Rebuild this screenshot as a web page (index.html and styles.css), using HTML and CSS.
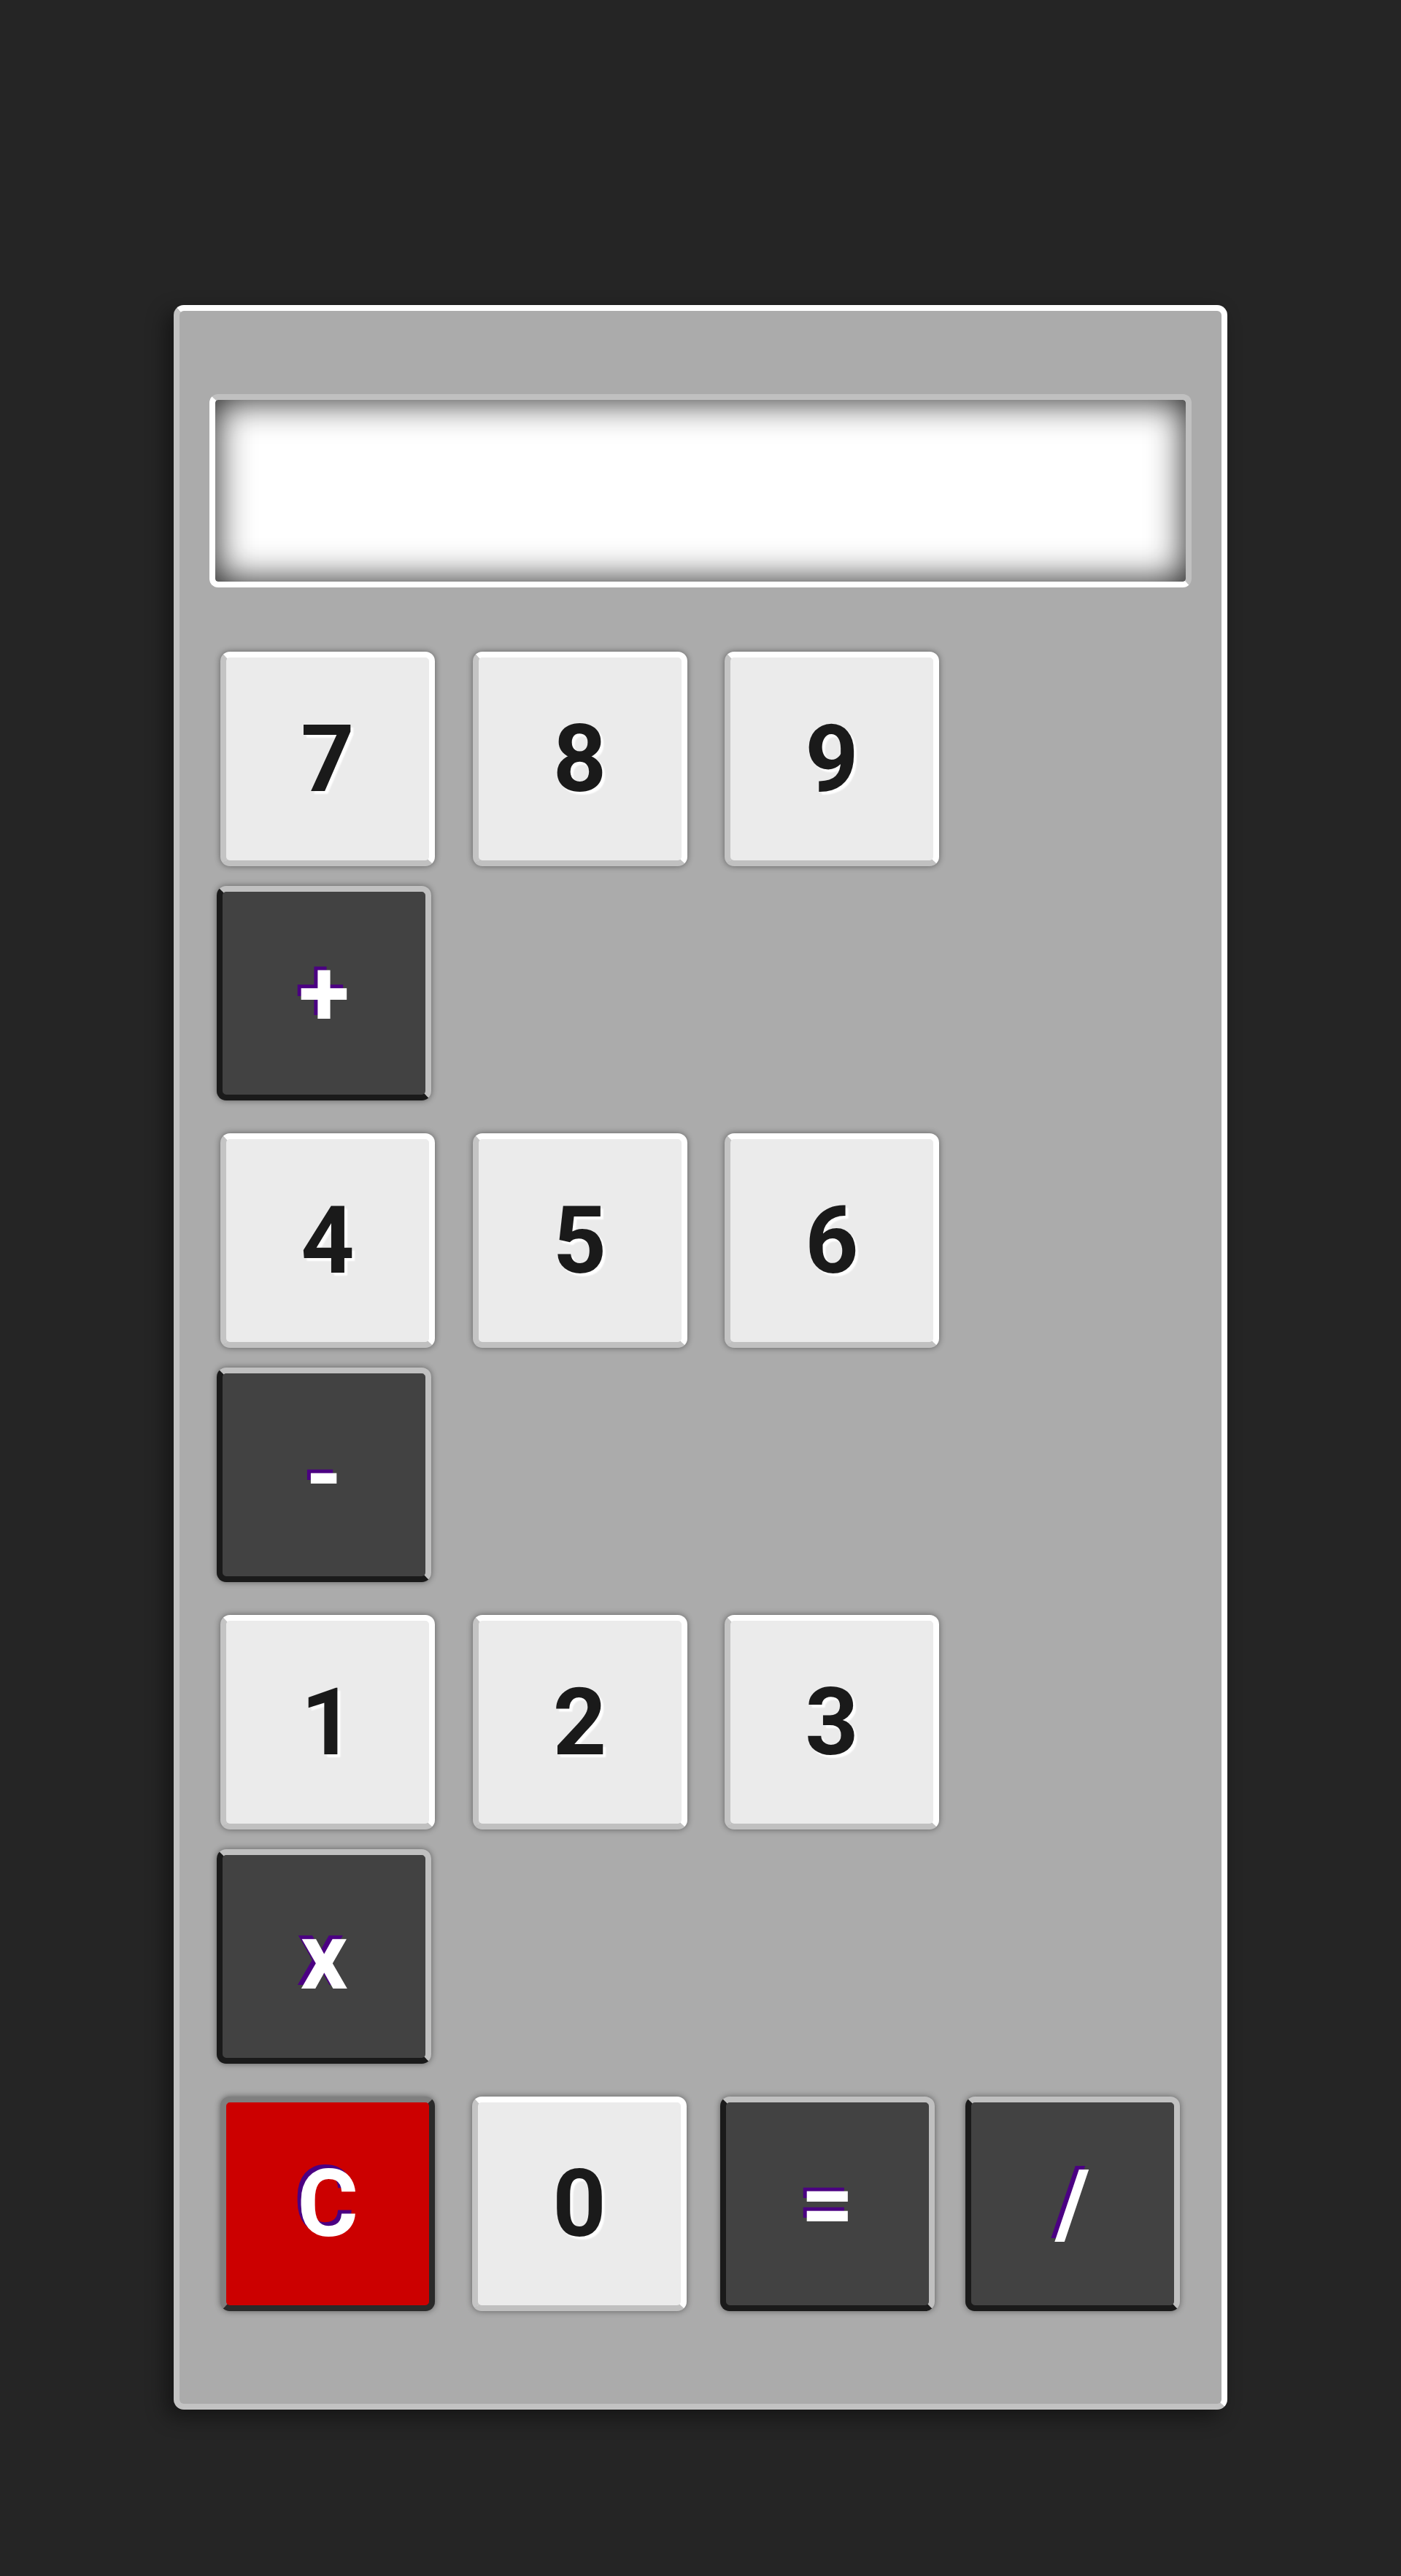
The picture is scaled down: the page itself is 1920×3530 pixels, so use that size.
FILE: index.html
```html
<!DOCTYPE html>
<html lang="en">
<head>
<meta charset="utf-8">
<title>Calculator</title>
<link rel="stylesheet" href="styles.css">
</head>
<body>
<div class="calc">
  <div class="display"></div>
  <div class="keys">
    <div class="row">
      <button class="key digit">7</button>
      <button class="key digit">8</button>
      <button class="key digit">9</button>
    </div>
    <div class="row row-op">
      <button class="key op">+</button>
    </div>
    <div class="row">
      <button class="key digit">4</button>
      <button class="key digit">5</button>
      <button class="key digit">6</button>
    </div>
    <div class="row row-op">
      <button class="key op">-</button>
    </div>
    <div class="row">
      <button class="key digit">1</button>
      <button class="key digit">2</button>
      <button class="key digit">3</button>
    </div>
    <div class="row row-op">
      <button class="key op">x</button>
    </div>
    <div class="row row-last">
      <button class="key clear">C</button>
      <button class="key digit key-zero">0</button>
      <button class="key op key-eq">=</button>
      <button class="key op key-div">/</button>
    </div>
  </div>
</div>
</body>
</html>
```
FILE: styles.css
```css
html, body {
  margin: 0;
  padding: 0;
  background: #252525;
}

body {
  min-height: 3530px;
  font-family: "Roboto", "Liberation Sans", sans-serif;
}

.calc {
  box-sizing: border-box;
  width: 1444px;
  margin: 418px auto 0;
  padding: 114px 41px 127px;
  background: #ababab;
  border: 8px solid;
  border-color: #ffffff #ffffff #c2c2c2 #c2c2c2;
  border-radius: 14px;
  box-shadow: -10px 10px 28px rgba(0, 0, 0, 0.45);
}

.display {
  box-sizing: border-box;
  height: 265px;
  background: #ffffff;
  border: 8px solid;
  border-color: #c0c0c0 #c0c0c0 #ffffff #ffffff;
  border-radius: 12px;
  box-shadow: inset 0 0 50px rgba(0, 0, 0, 0.92);
}

.keys {
  margin-top: 88px;
  display: flex;
  flex-direction: column;
}

.row {
  display: flex;
  gap: 51.5px;
  padding-left: 15px;
}

.row-op {
  margin: 27px 0 45px;
  padding-left: 10px;
}

.row-last {
  gap: 0;
}

.key {
  box-sizing: border-box;
  width: 294px;
  height: 294px;
  padding: 0;
  margin: 0;
  display: flex;
  align-items: center;
  justify-content: center;
  font-family: "Roboto", "Liberation Sans", sans-serif;
  font-weight: 700;
  font-size: 128px;
  line-height: 1;
  border: 8px solid;
  border-radius: 13px;
  box-shadow: 0 0 8px rgba(0, 0, 0, 0.45);
  cursor: pointer;
}

.row-last .key-zero { margin-left: 51px; }
.row-last .key-eq { margin-left: 46px; }
.row-last .key-div { margin-left: 42px; }

.digit {
  background: #ebebeb;
  color: #1a1a1a;
  border-color: #ffffff #ffffff #c0c0c0 #c4c4c4;
  text-shadow: 4px 4px 2px #ffffff;
}

.op {
  background: #424242;
  color: #ffffff;
  border-color: #c0c0c0 #c0c0c0 #1a1a1a #1a1a1a;
  text-shadow: -5px -5px 0 #4b0082;
}

.clear {
  background: #cc0000;
  color: #ffffff;
  border-color: #7f7f7f #2a2a2a #2a2a2a #7f7f7f;
  text-shadow: -5px -5px 0 #4b0082;
}
```
